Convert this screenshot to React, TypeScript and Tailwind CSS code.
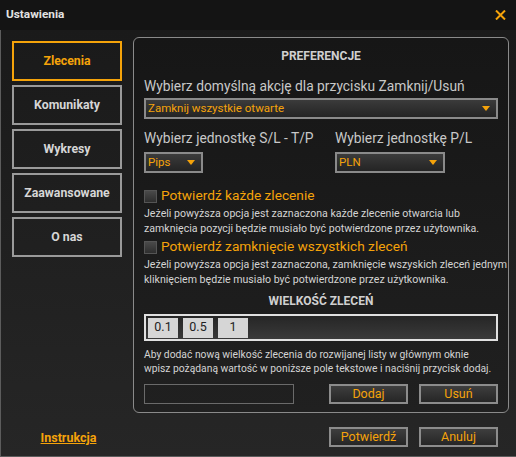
import { useState } from "react";

const orange = "text-[#f5a30a]";

function Arrow() {
  return (
    <svg width="8" height="5" viewBox="0 0 8 5" className="shrink-0">
      <path d="M0 0h8L4 5z" fill="#f5a30a" />
    </svg>
  );
}

function Select({ value, className }: { value: string; className: string }) {
  return (
    <div
      className={`flex h-[21px] items-center justify-between border-2 border-[#8a8a8a] bg-[#2c2c2c] bg-linear-to-b from-[#3b3b3b] to-[#242424] pl-[2px] pr-[6px] text-[11.5px] leading-none ${orange} ${className}`}
    >
      <span>{value}</span>
      <Arrow />
    </div>
  );
}

function DarkButton({ label }: { label: string }) {
  return (
    <button
      className={`flex h-[20px] w-[79px] items-center justify-center border-2 border-[#8c8c8c] bg-linear-to-b from-[#3e3e3e] to-[#262626] text-[12.5px] leading-none ${orange}`}
    >
      {label}
    </button>
  );
}

function Check({ label, desc }: { label: string; desc: string[] }) {
  const [on, setOn] = useState(false);
  return (
    <div className="flex flex-col">
      <label className="flex h-[18px] cursor-pointer items-center gap-[4px]">
        <span
          onClick={() => setOn(!on)}
          className="h-[13px] w-[13px] border border-[#555] bg-linear-to-b from-[#4a4a4a] to-[#2e2e2e]"
        />
        <span className={`text-[13.7px] leading-none ${orange}`}>{label}</span>
      </label>
      <div className="mt-[1px] text-[10.6px] leading-[15px] whitespace-nowrap text-[#d4d4d4]">
        {desc.map((d) => (
          <div key={d}>{d}</div>
        ))}
      </div>
    </div>
  );
}

const tabs = ["Zlecenia", "Komunikaty", "Wykresy", "Zaawansowane", "O nas"];

export default function App() {
  const [active, setActive] = useState("Zlecenia");

  return (
    <div
      className="flex h-[457px] w-[516px] flex-col bg-[#141414] text-[#c8c8c8]"
      style={{ fontFamily: 'Roboto, "Noto Sans", sans-serif' }}
    >
      {/* title bar */}
      <div className="flex h-[30px] shrink-0 items-center justify-between pl-[6px] pr-[10px]">
        <span className="text-[11.8px] font-bold text-[#e2e2e2]">Ustawienia</span>
        <svg width="11" height="10" viewBox="0 0 11 10">
          <path d="M1 0.5l9 9M10 0.5l-9 9" stroke="#f5a30a" strokeWidth="2" />
        </svg>
      </div>

      <div className="flex flex-1 border-b border-l border-[#5c5c5c] bg-linear-to-b from-[#1a1a1a] to-[#262626]">
        {/* left nav */}
        <div className="flex w-[132px] shrink-0 flex-col px-[11px] pt-[11px] pb-[10px]">
          <div className="flex flex-col gap-[4px]">
            {tabs.map((t) => (
              <button
                key={t}
                onClick={() => setActive(t)}
                className={`flex h-[40px] w-[110px] items-center justify-center border-2 text-[12.3px] font-bold ${
                  active === t
                    ? "border-[#f5a30a] text-[#f5a30a]"
                    : "border-[#9a9a9a] text-[#d6d6d6]"
                }`}
              >
                {t}
              </button>
            ))}
          </div>
          <div className="flex-1" />
          <a className="self-center pl-[3px] text-[12.5px] font-bold leading-[16px] text-[#f5a30a] underline">
            Instrukcja
          </a>
        </div>

        {/* right side */}
        <div className="flex w-[376px] flex-col pt-[7px]">
          <div className="flex h-[376px] w-[376px] flex-col overflow-hidden rounded-[6px] border border-[#8a8a8a] bg-linear-to-b from-[#161616] to-[#202020] px-[10px] pt-[10px]">
            <div className="text-center text-[12px] leading-[16px] font-bold text-[#d0d0d0]">
              PREFERENCJE
            </div>
            <div className="mt-[12px] text-[13.8px] leading-[20px] whitespace-nowrap">
              Wybierz domyślną akcję dla przycisku Zamknij/Usuń
            </div>
            <Select value="Zamknij wszystkie otwarte" className="mt-[2px] w-[354px]" />
            <div className="mt-[9px] flex">
              <div className="w-[191px]">
                <div className="text-[13.8px] leading-[20px] whitespace-nowrap">
                  Wybierz jednostkę S/L - T/P
                </div>
                <Select value="Pips" className="mt-[4px] w-[59px]" />
              </div>
              <div>
                <div className="text-[13.8px] leading-[20px] whitespace-nowrap">
                  Wybierz jednostkę P/L
                </div>
                <Select value="PLN" className="mt-[4px] w-[110px]" />
              </div>
            </div>
            <div className="mt-[14px]">
              <Check
                label="Potwierdź każde zlecenie"
                desc={[
                  "Jeżeli powyższa opcja jest zaznaczona każde zlecenie otwarcia lub",
                  "zamknięcia pozycji będzie musiało być potwierdzone przez użytownika.",
                ]}
              />
            </div>
            <div className="mt-[2px]">
              <Check
                label="Potwierdź zamknięcie wszystkich zleceń"
                desc={[
                  "Jeżeli powyższa opcja jest zaznaczona, zamknięcie wszyskich zleceń jednym",
                  "kliknięciem będzie musiało być potwierdzone przez użytkownika.",
                ]}
              />
            </div>
            <div className="mt-[6px] text-center text-[12px] leading-[16px] font-bold text-[#d0d0d0]">
              WIELKOŚĆ ZLECEŃ
            </div>
            <div className="mt-[5px] flex h-[27px] w-[354px] shrink-0 items-center gap-[5px] border-2 border-[#e0e0e0] bg-[#2e2e2e] bg-linear-to-b from-[#262626] to-[#3a3a3a] px-[2px]">
              {["0.1", "0.5", "1"].map((v) => (
                <div
                  key={v}
                  className="flex h-[20px] w-[30px] items-center justify-center bg-[#d6d6d6] text-[12.5px] text-[#222]"
                >
                  {v}
                </div>
              ))}
            </div>
            <div className="mt-[7px] text-[10.3px] leading-[14px] whitespace-nowrap text-[#d4d4d4]">
              <div>Aby dodać nową wielkość zlecenia do rozwijanej listy w głównym oknie</div>
              <div>wpisz pożądaną wartość w poniższe pole tekstowe i naciśnij przycisk dodaj.</div>
            </div>
            <div className="mt-[8px] flex w-[354px] items-center">
              <input className="h-[20px] w-[150px] border border-[#6a6a6a] bg-transparent text-[12px] text-[#ddd] outline-none" />
              <div className="ml-auto flex gap-[11px]">
                <DarkButton label="Dodaj" />
                <DarkButton label="Usuń" />
              </div>
            </div>
          </div>
          <div className="mt-[14px] flex justify-end gap-[11px] pr-[11px]">
            <DarkButton label="Potwierdź" />
            <DarkButton label="Anuluj" />
          </div>
        </div>
      </div>
    </div>
  );
}
